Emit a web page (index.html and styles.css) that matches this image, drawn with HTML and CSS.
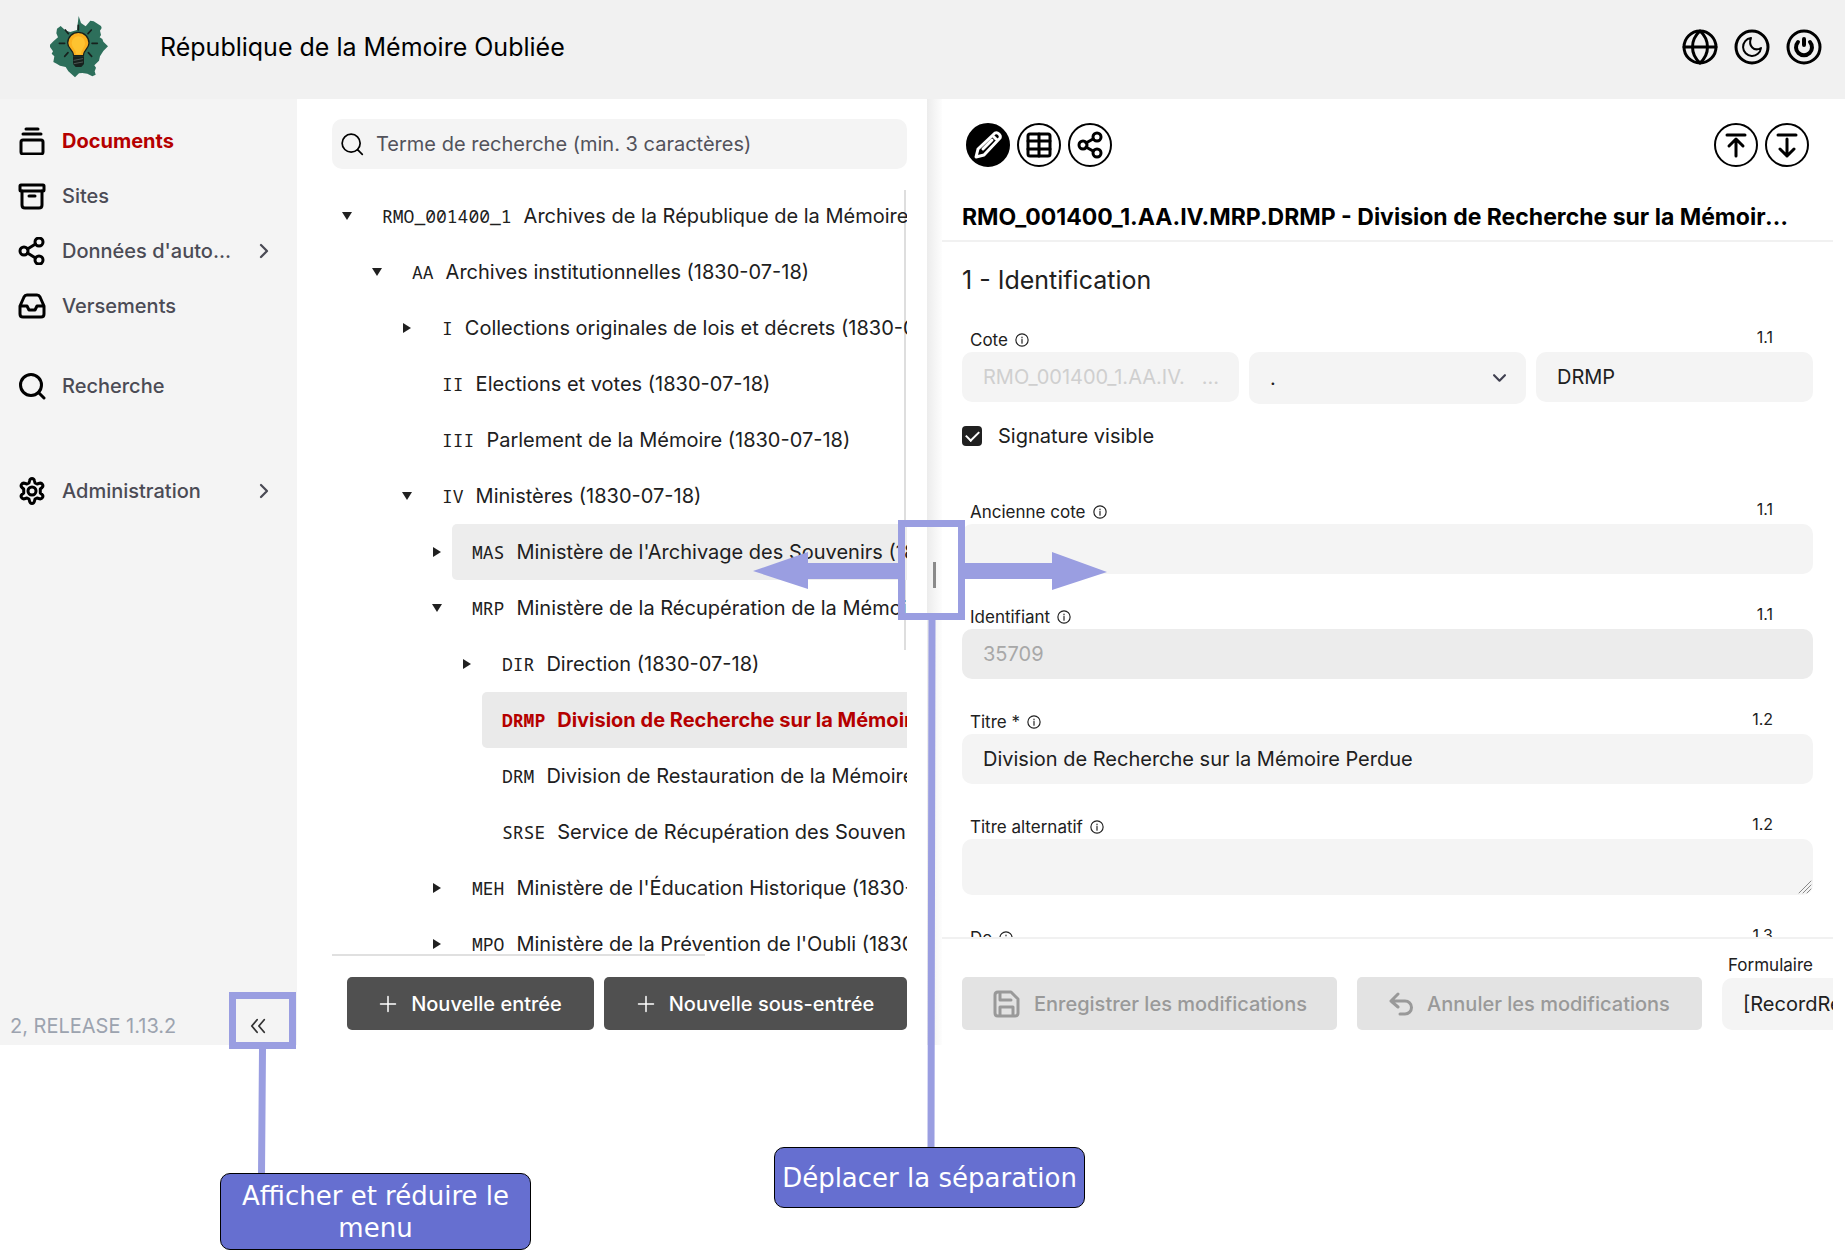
FILE: index.html
```html
<!DOCTYPE html>
<html lang="fr">
<head>
    <meta charset="UTF-8">
    <meta name="viewport" content="width=device-width, initial-scale=1.0">
    <title>République de la Mémoire Oubliée</title>
    <link rel="stylesheet" href="styles.css">
</head>
<body>

    <!-- Shared icons -->
    <svg class="sprite" aria-hidden="true">
        <symbol id="i-share" viewBox="0 0 28 28"><circle cx="6" cy="14" r="4"/><circle cx="21" cy="5" r="4"/><circle cx="21" cy="23" r="4"/><path d="m9.500 12 8-5M9.500 16l8 5"/></symbol>
        <symbol id="i-search" viewBox="0 0 28 28"><circle cx="13" cy="13" r="10.500"/><path d="m20.500 20.500 5.500 5.500"/></symbol>
        <symbol id="i-right" viewBox="0 0 24 24"><path d="m8 4 8 8-8 8"/></symbol>
        <symbol id="i-info" viewBox="0 0 24 24"><circle cx="12" cy="12" r="10.500"/><path d="M12 11v6.500M12 7v1"/></symbol>
        <symbol id="i-plus" viewBox="0 0 24 24"><path d="M12 2v20M2 12h20"/></symbol>
    </svg>

    <div class="app">
        <header class="topbar">
            <svg class="logo" viewBox="117 30 180 192" aria-hidden="true">
                <path fill="#2d6f5b" d="M203 33l7 21 14 10 14-17 10 2 22 14 2 6-5 8 3 13-4 7 8 5 3 8 14 14-14 14-10 16-3 13-14 14 5 7-4 11 3 10-10 5-15-8-15-2-10 1-12 12-20-18-8-13-17-4-10-6-10-5 3-17-8-8 4-7-12-17 14-14 13-11-5-12 2-14 11-8 15 14 14 4 20-6 1-10z"/>
                <g stroke="#17211d" stroke-width="5" stroke-linecap="round"><path d="M202 61v14M241 75l-10 11M163 75l9 11M145 115h16M243 115h16M161 154l10-11M242 154l-10-11"/></g>
                <path d="M188 152c0-18-18-20-18-38a32 32 0 0 1 64 0c0 18-17 20-17 38z" fill="#fbb120" stroke="#17211d" stroke-width="4"/>
                <path d="M195 148c0-16-13-20-13-34a20 20 0 0 1 40 0c0 14-12 18-12 34z" fill="#fec330"/>
                <path d="M186 154h33v23l-8 9h-17l-8-9z" fill="#17211d"/>
                <path d="M189 166l26-5M189 176l26-5" stroke="#66736e" stroke-width="2"/>
            </svg>
            <h1 class="app-name">République de la Mémoire Oubliée</h1>
            <div class="top-actions">
                <button class="icon-btn" aria-label="Langue"><svg viewBox="0 0 36 36"><circle cx="18" cy="18" r="16"/><path d="M18 2C8 11 8 25 18 34M18 2c10 9 10 23 0 32M2 18h32"/></svg></button>
                <button class="icon-btn" aria-label="Mode sombre"><svg viewBox="0 0 36 36"><circle cx="18" cy="18" r="16"/><path class="thin" d="M17 9a9 9 0 1 0 10 10c-7 4-13-2-10-10z"/></svg></button>
                <button class="icon-btn" aria-label="Déconnexion"><svg viewBox="0 0 36 36"><circle cx="18" cy="18" r="16"/><path class="heavy" d="M18 10v6M12 13a8 8 0 1 0 12 0"/></svg></button>
            </div>
        </header>

        <div class="workspace">
            <!-- Main menu -->
            <nav class="sidebar">
                <a class="menu-item active" href="#"><svg viewBox="0 0 28 28"><rect x="3" y="13" width="22" height="14" rx="2"/><path d="M5 7h18M8 2h12"/></svg><span>Documents</span></a>
                <a class="menu-item" href="#"><svg viewBox="0 0 28 28"><rect x="2" y="3" width="24" height="6" rx="1"/><path d="M4 9v14q0 3 3 3h14q3 0 3-3V9M11 14h6"/></svg><span>Sites</span></a>
                <a class="menu-item" href="#"><svg><use href="#i-share"/></svg><span>Données d'auto...</span><svg class="chevron"><use href="#i-right"/></svg></a>
                <a class="menu-item" href="#"><svg viewBox="0 0 28 28"><path d="M2 14 6 5q1-2 3-2h10q2 0 3 2l4 9v8q0 3-3 3H5q-3 0-3-3zh7l2 4h6l2-4h7"/></svg><span>Versements</span></a>
                <a class="menu-item spaced" href="#"><svg><use href="#i-search"/></svg><span>Recherche</span></a>
                <a class="menu-item far" href="#"><svg viewBox="0 0 28 28"><circle cx="14" cy="14" r="4"/><path d="M14 1.500q2 0 2.500 2.500l.5 2 2 1 2.500-.8q2-.4 3 1.300t-.4 3L22.300 12v4l1.800 1.500q1.400 1.300.4 3t-3 1.300L19 21l-2 1-.5 2q-.5 2.500-2.500 2.500t-2.500-2.500l-.5-2-2-1-2.500.8q-2 .4-3-1.300t.4-3L5.700 16v-4l-1.800-1.500q-1.400-1.300-.4-3t3-1.300L9 7l2-1 .5-2q.5-2.500 2.500-2.500z"/></svg><span>Administration</span><svg class="chevron"><use href="#i-right"/></svg></a>
                <div class="sidebar-foot">
                    <span>2, RELEASE 1.13.2</span>
                    <button class="collapse" aria-label="Réduire le menu"><svg viewBox="0 0 18 18"><path d="M8 2 2 9l6 7M16 2l-6 7 6 7"/></svg></button>
                </div>
            </nav>

            <!-- Archive tree -->
            <section class="tree-pane">
                <div class="search">
                    <svg><use href="#i-search"/></svg>
                    <input type="text" aria-label="Recherche" placeholder="Terme de recherche (min. 3 caractères)">
                </div>
                <ul class="tree">
                    <li class="l0 open"><a href="#"><code>RMO_001400_1</code>Archives de la République de la Mémoire Oubliée</a></li>
                    <li class="l1 open"><a href="#"><code>AA</code>Archives institutionnelles (1830-07-18)</a></li>
                    <li class="l2 closed"><a href="#"><code>I</code>Collections originales de lois et décrets (1830-07-18)</a></li>
                    <li class="l2"><a href="#"><code>II</code>Elections et votes (1830-07-18)</a></li>
                    <li class="l2"><a href="#"><code>III</code>Parlement de la Mémoire (1830-07-18)</a></li>
                    <li class="l2 open"><a href="#"><code>IV</code>Ministères (1830-07-18)</a></li>
                    <li class="l3 closed"><a class="hover" href="#"><code>MAS</code>Ministère de l'Archivage des Souvenirs (1830-07-18)</a></li>
                    <li class="l3 open"><a href="#"><code>MRP</code>Ministère de la Récupération de la Mémoire (1830-07-18)</a></li>
                    <li class="l4 closed"><a href="#"><code>DIR</code>Direction (1830-07-18)</a></li>
                    <li class="l4"><a class="selected" href="#"><code>DRMP</code>Division de Recherche sur la Mémoire Perdue</a></li>
                    <li class="l4"><a href="#"><code>DRM</code>Division de Restauration de la Mémoire</a></li>
                    <li class="l4"><a href="#"><code>SRSE</code>Service de Récupération des Souvenirs</a></li>
                    <li class="l3 closed"><a href="#"><code>MEH</code>Ministère de l'Éducation Historique (1830-07-18)</a></li>
                    <li class="l3 closed"><a href="#"><code>MPO</code>Ministère de la Prévention de l'Oubli (1830-07-18)</a></li>
                </ul>
                <div class="tree-actions">
                    <button class="btn dark"><svg><use href="#i-plus"/></svg>Nouvelle entrée</button>
                    <button class="btn dark wide"><svg><use href="#i-plus"/></svg>Nouvelle sous-entrée</button>
                </div>
            </section>

            <div class="splitter" role="separator"><span></span></div>

            <!-- Record form -->
            <main class="record">
                <div class="record-tools">
                    <button class="round on" aria-label="Modifier"><svg viewBox="0 0 44 44"><path d="M10 34l2-8 17-16q2-1 4 1t1 4L18 32zM27 13l4 4M17 26l9-9"/></svg></button>
                    <button class="round" aria-label="Tableau"><svg viewBox="0 0 44 44"><rect x="11" y="11" width="22" height="22" rx="2"/><path d="M11 18h22M11 26h22M22 11v22"/></svg></button>
                    <button class="round" aria-label="Partager"><svg viewBox="0 0 44 44"><circle cx="15" cy="22" r="4"/><circle cx="29" cy="14" r="4"/><circle cx="29" cy="30" r="4"/><path d="m18 20 7-4M18 24l7 4"/></svg></button>
                    <button class="round push" aria-label="Monter"><svg viewBox="0 0 44 44"><path d="M13 12h18M22 33V17M15 23l7-7 7 7"/></svg></button>
                    <button class="round" aria-label="Descendre"><svg viewBox="0 0 44 44"><path d="M13 12h18M22 16v17M15 26l7 7 7-7"/></svg></button>
                </div>
                <h2 class="record-title">RMO_001400_1.AA.IV.MRP.DRMP - Division de Recherche sur la Mémoire Perdue</h2>

                <form class="record-form">
                    <h3>1 - Identification</h3>
                    <div class="field">
                        <div class="label-row"><label for="cote">Cote <svg><use href="#i-info"/></svg></label><span>1.1</span></div>
                        <div class="cote-row">
                            <input class="prefix" type="text" value="RMO_001400_1.AA.IV.   ..." aria-label="Préfixe" disabled>
                            <div class="select-wrap">
                                <select aria-label="Séparateur"><option>.</option></select>
                                <svg viewBox="0 0 12 12"><path d="m1 3 5 5 5-5"/></svg>
                            </div>
                            <input type="text" id="cote" value="DRMP">
                        </div>
                        <label class="check"><input type="checkbox" checked>Signature visible</label>
                    </div>
                    <div class="field">
                        <div class="label-row"><label for="ancienne">Ancienne cote <svg><use href="#i-info"/></svg></label><span>1.1</span></div>
                        <input type="text" id="ancienne">
                    </div>
                    <div class="field">
                        <div class="label-row"><label for="identifiant">Identifiant <svg><use href="#i-info"/></svg></label><span>1.1</span></div>
                        <input type="text" id="identifiant" value="35709" disabled>
                    </div>
                    <div class="field">
                        <div class="label-row"><label for="titre">Titre * <svg><use href="#i-info"/></svg></label><span>1.2</span></div>
                        <input type="text" id="titre" value="Division de Recherche sur la Mémoire Perdue">
                    </div>
                    <div class="field">
                        <div class="label-row"><label for="alternatif">Titre alternatif <svg><use href="#i-info"/></svg></label><span>1.2</span></div>
                        <div class="area-wrap">
                            <textarea id="alternatif"></textarea>
                            <svg viewBox="0 0 14 14"><path d="M1 13 13 1M5 13l8-8M9 13l4-4"/></svg>
                        </div>
                    </div>
                    <div class="field">
                        <div class="label-row"><label for="de">De <svg><use href="#i-info"/></svg></label><span>1.3</span></div>
                        <input type="text" id="de">
                    </div>
                </form>

                <footer class="record-foot">
                    <button class="btn light save" disabled><svg viewBox="0 0 28 28"><path d="M3 5q0-3 3-3h13l7 7v14q0 3-3 3H6q-3 0-3-3zM8 2v8h11M8 26v-9h13v9"/></svg>Enregistrer les modifications</button>
                    <button class="btn light" disabled><svg viewBox="0 0 24 24"><path d="M9 2 2 9l7 6M2 9h14a6.500 6.500 0 0 1 0 13h-5"/></svg>Annuler les modifications</button>
                    <div class="form-choice">
                        <label for="formulaire">Formulaire</label>
                        <select id="formulaire"><option>[RecordResource]</option></select>
                    </div>
                </footer>
            </main>
        </div>
    </div>

    <!-- Annotations over the application -->
    <div class="notes">
        <svg class="marks" viewBox="0 0 1845 1250">
            <path class="stroke" d="M232.500 995.500h60v50h-60zM901.500 523.500h60v93h-60z"/>
            <path class="stroke" d="M262.500 1049 261.500 1174M932 620 931 1148"/>
            <path d="M898 563h-90v-11l-55 19 55 18v-10h90zM965 563h87v-11l55 20-55 18v-11h-87z"/>
        </svg>
        <div class="callout menu-note">Afficher et réduire le menu</div>
        <div class="callout split-note">Déplacer la séparation</div>
    </div>

</body>
</html>
```
FILE: styles.css
```css
* {
    box-sizing: border-box;
}

body {
    margin: 0;
    background: #fff;
    color: #202020;
    font-family: Inter, "Liberation Sans", sans-serif;
    font-size: 20px;
}

h1, h2, h3 {
    margin: 0;
    font-weight: normal;
}

a {
    color: inherit;
    text-decoration: none;
}

button, input, select, textarea {
    font: inherit;
    color: inherit;
    border: none;
}

svg {
    fill: none;
    stroke: currentColor;
    stroke-width: 2;
    stroke-linecap: round;
    stroke-linejoin: round;
    flex-shrink: 0;
}

.sprite {
    position: absolute;
    width: 0;
    height: 0;
}

.app {
    display: flex;
    flex-direction: column;
    height: calc(100vh - 205px);
    min-height: 700px;
}

/* Header */
.topbar {
    display: flex;
    align-items: center;
    height: 99px;
    padding: 0 12px 6px 50px;
    background: #f1f1f1;
    color: #000;
    flex-shrink: 0;
}

.logo {
    width: 60px;
    height: 64px;
    margin-right: 50px;
    stroke: none;
}

.app-name {
    font-size: 25px;
}

.top-actions {
    display: flex;
    gap: 16px;
    margin-left: auto;
    margin-right: 11px;
}

.icon-btn {
    width: 36px;
    height: 36px;
    padding: 0;
    background: none;
}

.icon-btn svg {
    display: block;
    stroke-width: 3;
}

.icon-btn .thin {
    stroke-width: 2;
}

.icon-btn .heavy {
    stroke-width: 4;
}

.workspace {
    display: flex;
    flex: 1;
    min-height: 0;
    margin-right: 12px;
}

/* Main menu */
.sidebar {
    display: flex;
    flex-direction: column;
    flex: 0 0 297px;
    padding-top: 14px;
    background: #f4f4f4;
    color: #4b4b55;
}

.menu-item {
    display: flex;
    align-items: center;
    height: 55px;
    padding: 0 24px 0 18px;
    font-weight: 500;
}

.menu-item svg {
    width: 28px;
    height: 28px;
    margin-right: 16px;
    color: #000;
    stroke-width: 3;
}

.menu-item .chevron {
    width: 18px;
    height: 18px;
    margin: 0 0 0 auto;
    color: #4b4b55;
    stroke-width: 3;
}

.menu-item.active {
    color: #b50000;
    font-weight: bold;
}

.menu-item.spaced {
    margin-top: 25px;
}

.menu-item.far {
    margin-top: 50px;
}

.sidebar-foot {
    display: flex;
    align-items: center;
    justify-content: space-between;
    height: 38px;
    margin-top: auto;
    padding: 0 31px 0 10px;
    color: #9ca3af;
}

.collapse {
    display: flex;
    padding: 0;
    background: none;
    color: #333;
}

.collapse svg {
    width: 16px;
    height: 16px;
}

/* Archive tree */
.tree-pane {
    display: flex;
    flex-direction: column;
    flex: 0 0 630px;
    min-width: 0;
    padding: 20px 20px 15px 35px;
}

.search {
    display: flex;
    align-items: center;
    height: 50px;
    padding: 0 8px;
    border-radius: 10px;
    background: #f4f4f4;
    color: #000;
    flex-shrink: 0;
}

.search svg {
    width: 24px;
    height: 24px;
}

.search input {
    flex: 1;
    margin-left: 12px;
    padding: 0;
    background: none;
}

.search input::placeholder {
    color: #52525b;
    opacity: 1;
}

.tree {
    flex: 1;
    min-height: 0;
    margin: 19px 0 0;
    padding: 0;
    overflow: hidden;
    list-style: none;
    background:
        linear-gradient(#dedede, #dedede) right 1px top 2px / 2px 460px no-repeat,
        linear-gradient(#e0e0e0, #e0e0e0) left bottom / 373px 2px no-repeat;
}

.tree li {
    display: flex;
    align-items: center;
    height: 56px;
    white-space: nowrap;
}

.tree li::before {
    content: "";
    width: 10px;
    height: 8px;
    margin-right: 10px;
    margin-left: 10px;
    flex-shrink: 0;
}

.tree .open::before {
    background: #202020;
    clip-path: polygon(0 0, 100% 0, 50% 100%);
}

.tree .closed::before {
    width: 8px;
    height: 10px;
    margin-right: 11px;
    margin-left: 11px;
    background: #202020;
    clip-path: polygon(0 0, 100% 50%, 0 100%);
}

.tree .l1 { padding-left: 30px; }
.tree .l2 { padding-left: 60px; }
.tree .l3 { padding-left: 90px; }
.tree .l4 { padding-left: 120px; }

.tree a {
    flex: 1;
    padding: 0 20px;
    border-radius: 5px;
    line-height: 56px;
}

.tree code {
    margin-right: 12px;
    font-family: "Noto Sans Mono", "DejaVu Sans Mono", monospace;
    font-size: 18px;
}

.tree .hover {
    background: #ededed;
}

.tree .selected {
    background: #eaeaea;
    color: #b50000;
    font-weight: bold;
}

.tree-actions {
    display: flex;
    gap: 10px;
    margin-top: 21px;
    padding-left: 15px;
}

.btn {
    display: flex;
    align-items: center;
    justify-content: center;
    gap: 14px;
    height: 53px;
    padding: 0;
    border-radius: 5px;
    font-weight: 500;
    white-space: nowrap;
}

.btn svg {
    width: 18px;
    height: 18px;
}

.dark {
    flex: 247;
    background: #505050;
    color: #fff;
}

.dark.wide {
    flex: 303;
}

/* Splitter */
.splitter {
    display: flex;
    align-items: center;
    justify-content: center;
    flex: 0 0 15px;
    padding-top: 6px;
    background: linear-gradient(to right, #ececec, #fdfdfd);
    cursor: col-resize;
}

.splitter span {
    width: 3px;
    height: 26px;
    background: #8a8a8a;
}

/* Record form */
.record {
    display: flex;
    flex-direction: column;
    flex: 1;
    min-width: 0;
    overflow: hidden;
}

.record-tools {
    display: flex;
    gap: 7px;
    padding: 24px 24px 0;
}

.round {
    width: 44px;
    height: 44px;
    padding: 0;
    border: 2px solid #000;
    border-radius: 50%;
    background: none;
    color: #000;
}

.round svg {
    display: block;
    width: 44px;
    height: 44px;
    margin: -2px;
    stroke-width: 3;
}

.round.on {
    background: #000;
    color: #fff;
}

.round.push {
    margin-left: auto;
}

.record-title {
    height: 75px;
    padding: 34px 34px 0 20px;
    border-bottom: 2px solid #f1f1f1;
    overflow: hidden;
    color: #000;
    font-size: 23px;
    font-weight: bold;
    line-height: 32px;
    text-overflow: ellipsis;
    white-space: nowrap;
    flex-shrink: 0;
}

.record-form {
    flex: 1;
    min-height: 0;
    padding: 22px 20px 0;
    overflow: hidden;
}

.record-form h3 {
    margin-bottom: 31px;
    font-size: 25px;
    line-height: 32px;
}

.field {
    margin-bottom: 30px;
}

.label-row {
    display: flex;
    align-items: center;
    justify-content: space-between;
    height: 25px;
    padding: 0 40px 0 8px;
    font-size: 17px;
}

.label-row label {
    display: flex;
    align-items: center;
    gap: 7px;
}

.label-row svg {
    width: 14px;
    height: 14px;
}

.label-row span {
    padding-bottom: 5px;
    font-size: 16px;
}

.record input[type="text"],
.record select,
.record textarea {
    display: block;
    width: 100%;
    height: 50px;
    padding: 0 21px;
    border-radius: 10px;
    background: #f4f4f4;
    appearance: none;
}

.area-wrap {
    display: grid;
}

.area-wrap svg {
    grid-area: 1 / 1;
    place-self: end;
    width: 14px;
    height: 14px;
    margin: 1px;
    color: #888;
    stroke-width: 1;
}

.record textarea {
    grid-area: 1 / 1;
    height: 56px;
    resize: none;
}

.record input:disabled {
    background: #ececec;
    color: #a8a8a8;
}

.record .cote-row .prefix {
    background: #f4f4f4;
    color: #cfcfcf;
    white-space: pre;
}

.cote-row {
    display: grid;
    grid-template-columns: repeat(3, 1fr);
    align-items: start;
    gap: 10px;
}

.select-wrap {
    display: grid;
    align-items: center;
}

.record .select-wrap select,
.record .form-choice select {
    grid-area: 1 / 1;
    height: 52px;
}

.select-wrap svg {
    grid-area: 1 / 1;
    justify-self: end;
    width: 13px;
    height: 13px;
    margin-right: 20px;
    color: #404050;
}

.check {
    display: flex;
    align-items: center;
    gap: 16px;
    height: 24px;
    margin: 20px 0 51px;
}

.check input {
    display: grid;
    place-items: center;
    width: 20px;
    height: 20px;
    margin: 0;
    border-radius: 4px;
    background: #202020;
    appearance: none;
}

.check input:checked::after {
    content: "";
    width: 11px;
    height: 6px;
    border: solid #fff;
    border-width: 0 0 2px 2px;
    transform: rotate(-45deg) translate(1px, -1px);
}

.record-foot {
    display: flex;
    align-items: flex-end;
    gap: 20px;
    height: 108px;
    padding: 0 0 15px 20px;
    border-top: 2px solid #f1f1f1;
    flex-shrink: 0;
}

.light {
    flex: 0 0 345px;
    background: #e3e3e3;
    color: #999;
}

.light.save {
    flex-basis: 375px;
}

.light svg {
    width: 24px;
    height: 24px;
    stroke-width: 3;
}

.light.save svg {
    width: 28px;
    height: 28px;
}

.form-choice {
    flex: 0 0 300px;
}

.form-choice label {
    display: block;
    padding-left: 6px;
    font-size: 17px;
    line-height: 26px;
}

/* Annotations */
.notes {
    position: absolute;
    top: 0;
    left: 0;
    pointer-events: none;
}

.marks {
    display: block;
    width: 1845px;
    height: 1250px;
    fill: #9a9ee1;
    stroke: none;
}

.marks .stroke {
    fill: none;
    stroke: #9a9ee1;
    stroke-width: 7;
    stroke-linecap: butt;
    stroke-linejoin: miter;
}

.callout {
    position: absolute;
    display: flex;
    align-items: center;
    justify-content: center;
    width: 311px;
    border: 1px solid #000;
    border-radius: 10px;
    background: #666fd0;
    color: #fff;
    font-family: "DejaVu Sans", sans-serif;
    font-size: 26px;
    line-height: 32px;
    text-align: center;
}

.menu-note {
    top: 1173px;
    left: 220px;
    height: 77px;
    padding: 0 12px;
}

.split-note {
    top: 1147px;
    left: 774px;
    height: 61px;
}
```
